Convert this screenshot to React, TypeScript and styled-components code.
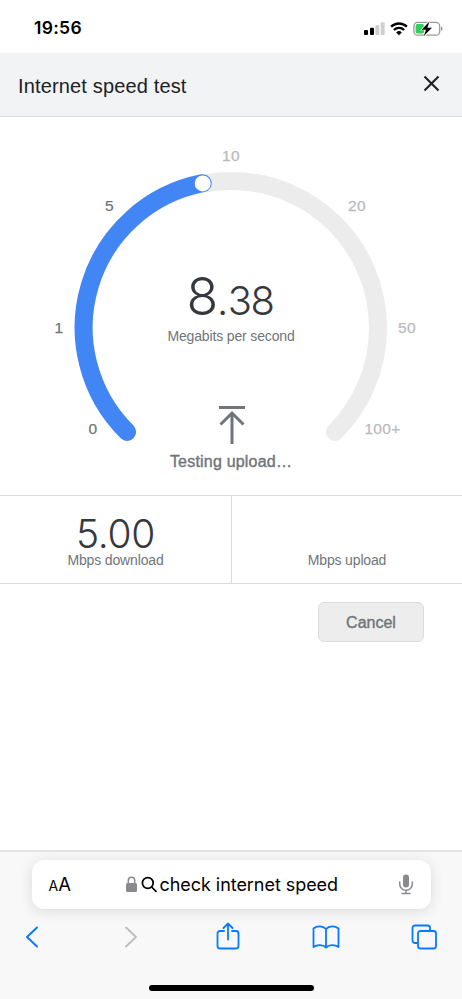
import React from "react";
import styled, { createGlobalStyle } from "styled-components";

const Global = createGlobalStyle`
  * { box-sizing: border-box; }
  body { margin: 0; background: #fff; }
`;

const Screen = styled.div`
  width: 462px;
  height: 999px;
  display: flex;
  flex-direction: column;
  overflow: hidden;
  background: #fff;
  color: #3c4043;
  font-family: "Liberation Sans", Arial, sans-serif;
`;

const StatusBar = styled.header`
  height: 53px;
  flex: none;
  display: flex;
  align-items: center;
  justify-content: space-between;
  padding: 2px 19px 0 34px;
`;

const Clock = styled.span`
  font: 600 17.5px/20px Inter, sans-serif;
  letter-spacing: 0.3px;
  color: #000;
`;

const StatusIcons = styled.svg`
  display: block;
  width: 80px;
  height: 18px;
`;

const TitleBar = styled.div`
  height: 64px;
  flex: none;
  display: flex;
  align-items: center;
  justify-content: space-between;
  padding: 0 22px 0 18px;
  background: #f1f3f4;
  border-bottom: 1px solid #dadce0;
`;

const Title = styled.h1`
  margin: 2px 0 0;
  font-weight: 400;
  font-size: 20px;
  line-height: 24px;
  letter-spacing: 0.15px;
  color: #202124;
`;

const CloseButton = styled.button`
  margin: -2px 0 0;
  padding: 0;
  border: 0;
  background: none;
  width: 17px;
  height: 17px;
  display: block;
  svg { display: block; }
`;

const GaugePanel = styled.section`
  position: relative;
  height: 378px;
  flex: none;
`;

const Dial = styled.svg`
  display: block;
  width: 462px;
  height: 378px;
`;

const Tick = styled.text<{ $reached?: boolean }>`
  font-size: 15.5px;
  letter-spacing: 0.3px;
  text-anchor: middle;
  fill: ${p => (p.$reached ? "#70757a" : "#b8babc")};
  stroke: ${p => (p.$reached ? "#70757a" : "#b8babc")};
  stroke-width: 0.25px;
`;

const Readout = styled.div`
  position: absolute;
  inset: 0;
  display: flex;
  flex-direction: column;
  align-items: center;
  padding-top: 149px;
`;

const Speed = styled.div`
  height: 62px;
  padding-right: 2px;
  font: 280 40px/62px Inter, sans-serif;
  letter-spacing: -1.5px;
  color: #35393d;
`;

const SpeedWhole = styled.span`
  font-size: 52px;
`;

const Point = styled.span`
  margin-right: 1px;
`;

const Caption = styled.div`
  font-size: 14px;
  line-height: 16px;
  letter-spacing: -0.15px;
  color: #70757a;
  white-space: nowrap;
`;

const Phase = styled.div`
  margin-top: 61px;
  display: flex;
  flex-direction: column;
  align-items: center;
  gap: 7px;
  svg { display: block; margin-left: 1px; }
`;

const PhaseLabel = styled.div`
  font-size: 16px;
  line-height: 20px;
  letter-spacing: 0.2px;
  color: #70757a;
  -webkit-text-stroke: 0.4px #70757a;
`;

const Results = styled.section`
  height: 89px;
  flex: none;
  display: grid;
  grid-template-columns: 1fr 1fr;
  border-top: 1px solid #dadce0;
  border-bottom: 1px solid #dadce0;
`;

const Result = styled.div`
  display: flex;
  flex-direction: column;
  align-items: center;
  padding-top: 20px;
  & + & { border-left: 1px solid #dadce0; }
`;

const ResultValue = styled.div`
  height: 36px;
  font: 280 39px/36px Inter, sans-serif;
  letter-spacing: -0.3px;
  color: #35393d;
`;

const Actions = styled.div`
  flex: 1;
  display: flex;
  justify-content: flex-end;
  align-items: flex-start;
  padding: 18px 38px 0;
`;

const CancelButton = styled.button`
  width: 106px;
  height: 40px;
  padding: 1px 0 0;
  border: 1px solid #dadce0;
  border-radius: 6px;
  background: #ededed;
  color: #70757a;
  font: 16px/20px "Liberation Sans", Arial, sans-serif;
  -webkit-text-stroke: 0.4px #70757a;
`;

const BrowserBar = styled.footer`
  height: 149px;
  flex: none;
  display: flex;
  flex-direction: column;
  align-items: center;
  padding-top: 8px;
  background: #f8f8f8;
  border-top: 2px solid #e3e4e4;
`;

const AddressBar = styled.div`
  width: 399px;
  height: 49px;
  flex: none;
  display: flex;
  align-items: center;
  padding: 0 17px;
  border-radius: 12px;
  background: #fff;
  box-shadow: 0 2px 14px rgba(0, 0, 0, 0.12);
  font: 18px/24px Inter, sans-serif;
  color: #000;
`;

const TextSize = styled.span`
  width: 77px;
  font-size: 18.5px;
  small { font-size: 14px; }
`;

const Query = styled.span`
  flex: 1;
  white-space: nowrap;
  letter-spacing: -0.05px;
  margin-left: 2px;
`;

const NavIcons = styled.nav`
  width: 490px;
  height: 30px;
  margin: 12px 6px 0 0;
  flex: none;
  display: grid;
  grid-template-columns: repeat(5, 1fr);
  justify-items: center;
  svg { display: block; }
`;

const HomeIndicator = styled.div`
  width: 165px;
  height: 6px;
  margin-top: 34px;
  border-radius: 3px;
  background: #000;
`;

const ticks = [
  { label: "0", x: 93, y: 317, reached: true },
  { label: "1", x: 59, y: 216, reached: true },
  { label: "5", x: 109.5, y: 94, reached: true },
  { label: "10", x: 231, y: 43.5 },
  { label: "20", x: 357, y: 94 },
  { label: "50", x: 407, y: 216 },
  { label: "100+", x: 382.5, y: 317 },
];

const line = { fill: "none", stroke: "#087aff", strokeWidth: 1.8, strokeLinejoin: "round", strokeLinecap: "round" } as const;

export default function App() {
  return (
    <Screen>
      <Global />
      <StatusBar>
        <Clock>19:56</Clock>
        <StatusIcons viewBox="363 18 80 18">
          <rect x="364" y="29" width="4" height="5" rx="1" />
          <rect x="370" y="26.7" width="4" height="7.3" rx="1" />
          <rect x="375.3" y="24" width="4" height="10" rx="1" fill="#cfcfcf" />
          <rect x="380.7" y="21.2" width="4" height="12.8" rx="1" fill="#cfcfcf" />
          <g fill="none" stroke="#000" strokeWidth="2.3">
            <path d="M391.1 25.7a11.4 11.4 0 0 1 15.8 0" />
            <path d="M393.9 29a7.3 7.3 0 0 1 10.2 0" />
          </g>
          <path d="M396.2 31.4a4 4 0 0 1 5.6 0L399 34.2z" />
          <rect x="413.9" y="21.4" width="25.8" height="12.8" rx="3.8" fill="none" stroke="#9a9a9a" strokeWidth="1.3" />
          <path d="M441 25.500c2 .4 2 4 0 4.400z" fill="#9a9a9a" />
          <rect x="415.600" y="23" width="8.400" height="9.600" rx="1.800" fill="#30d158" />
          <path d="M429 20.800l-6.600 7.500h3.800l-1.600 6.200 6.700-7.700h-3.900z" stroke="#fff" strokeWidth="2" />
          <path d="M429.500 20.500l-8 8.200h4.500l-2.200 6.300 8.200-8.200h-4.600z" />
        </StatusIcons>
      </StatusBar>
      <TitleBar>
        <Title>Internet speed test</Title>
        <CloseButton aria-label="Close">
          <svg width="17" height="17" viewBox="0 0 17 17">
            <path d="M1.5 1.5l14 14M15.5 1.5l-14 14" stroke="#202124" strokeWidth="2.1" fill="none" />
          </svg>
        </CloseButton>
      </TitleBar>
      <GaugePanel>
        <Dial viewBox="0 0 462 378">
          <path d="M127.1 314.9A147 147 0 1 1 334.9 314.9" fill="none" stroke="#ececec" strokeWidth="18" strokeLinecap="round" />
          <path d="M127.1 314.9A147 147 0 0 1 202.7 66.2" fill="none" stroke="#4285f4" strokeWidth="18" strokeLinecap="round" />
          <circle cx="202.7" cy="66.4" r="8" fill="#fff" />
          {ticks.map(t => (
            <Tick key={t.label} x={t.x} y={t.y} $reached={t.reached}>{t.label}</Tick>
          ))}
        </Dial>
        <Readout>
          <Speed><SpeedWhole>8</SpeedWhole><Point>.</Point>38</Speed>
          <Caption>Megabits per second</Caption>
          <Phase>
            <svg width="28" height="40" viewBox="0 0 28 40" fill="none" stroke="#70757a" strokeWidth="3">
              <path d="M1 2.5h26M14 39V8M2.5 19.5L14 8l11.500 11.500" />
            </svg>
            <PhaseLabel>Testing upload…</PhaseLabel>
          </Phase>
        </Readout>
      </GaugePanel>
      <Results>
        <Result>
          <ResultValue>5.00</ResultValue>
          <Caption>Mbps download</Caption>
        </Result>
        <Result>
          <ResultValue />
          <Caption>Mbps upload</Caption>
        </Result>
      </Results>
      <Actions>
        <CancelButton>Cancel</CancelButton>
      </Actions>
      <BrowserBar>
        <AddressBar>
          <TextSize><small>A</small>A</TextSize>
          <svg width="32" height="20" viewBox="0 0 32 20">
            <rect x="0" y="8" width="11" height="9" rx="1.5" fill="#8a8a8e" />
            <path d="M2.300 8V5.500a3.200 3.200 0 0 1 6.400 0V8" fill="none" stroke="#8a8a8e" strokeWidth="1.500" />
            <g fill="none" stroke="#000" strokeWidth="1.700" strokeLinecap="round">
              <circle cx="21.800" cy="8" r="5.400" />
              <path d="M25.700 12l4.300 4.400" />
            </g>
          </svg>
          <Query>check internet speed</Query>
          <svg width="16" height="22" viewBox="0 0 16 22" fill="none" stroke="#8a8a8e" strokeWidth="1.500" strokeLinecap="round">
            <rect x="5" y="0.500" width="6" height="13" rx="3" fill="#8a8a8e" stroke="none" />
            <path d="M1.700 8v2a6.300 6.300 0 0 0 12.600 0v-2M8 16.500v3M4 19.500h8" />
          </svg>
        </AddressBar>
        <NavIcons>
          <svg width="14" height="30" viewBox="0 0 14 30"><path {...line} strokeWidth={2} d="M12 6.500L2 16L12 25.500" /></svg>
          <svg width="14" height="30" viewBox="0 0 14 30"><path {...line} stroke="#bdbdbf" d="M3 6.500L13 16L3 25.500" /></svg>
          <svg width="24" height="30" viewBox="0 0 24 30"><path {...line} d="M8 10H4a2.500 2.500 0 0 0-2.500 2.500v12.500A2.500 2.500 0 0 0 4 27.500h16a2.500 2.500 0 0 0 2.500-2.500V12.500A2.500 2.500 0 0 0 20 10h-4M12 18.500V2.500M7.500 7L12 2.500L16.500 7" /></svg>
          <svg width="28" height="30" viewBox="0 0 28 30"><path {...line} d="M14 8C11 4.500 5 4.500 1.500 7.500V26C5 23.500 11 23.500 14 26.500C17 23.500 23 23.500 26.500 26V7.500C23 4.500 17 4.500 14 8zV26" /></svg>
          <svg width="26" height="30" viewBox="0 0 26 30"><path {...line} d="M7 22H4a2.500 2.500 0 0 1-2.500-2.500V7A2.500 2.500 0 0 1 4 4.500h12.500a2.500 2.500 0 0 1 2.500 2.500V9.500M9.500 10H22.500a2.500 2.500 0 0 1 2.500 2.500V25a2.500 2.500 0 0 1-2.500 2.500H9.500a2.500 2.500 0 0 1-2.500-2.500V12.500A2.500 2.500 0 0 1 9.500 10z" /></svg>
        </NavIcons>
        <HomeIndicator />
      </BrowserBar>
    </Screen>
  );
}
